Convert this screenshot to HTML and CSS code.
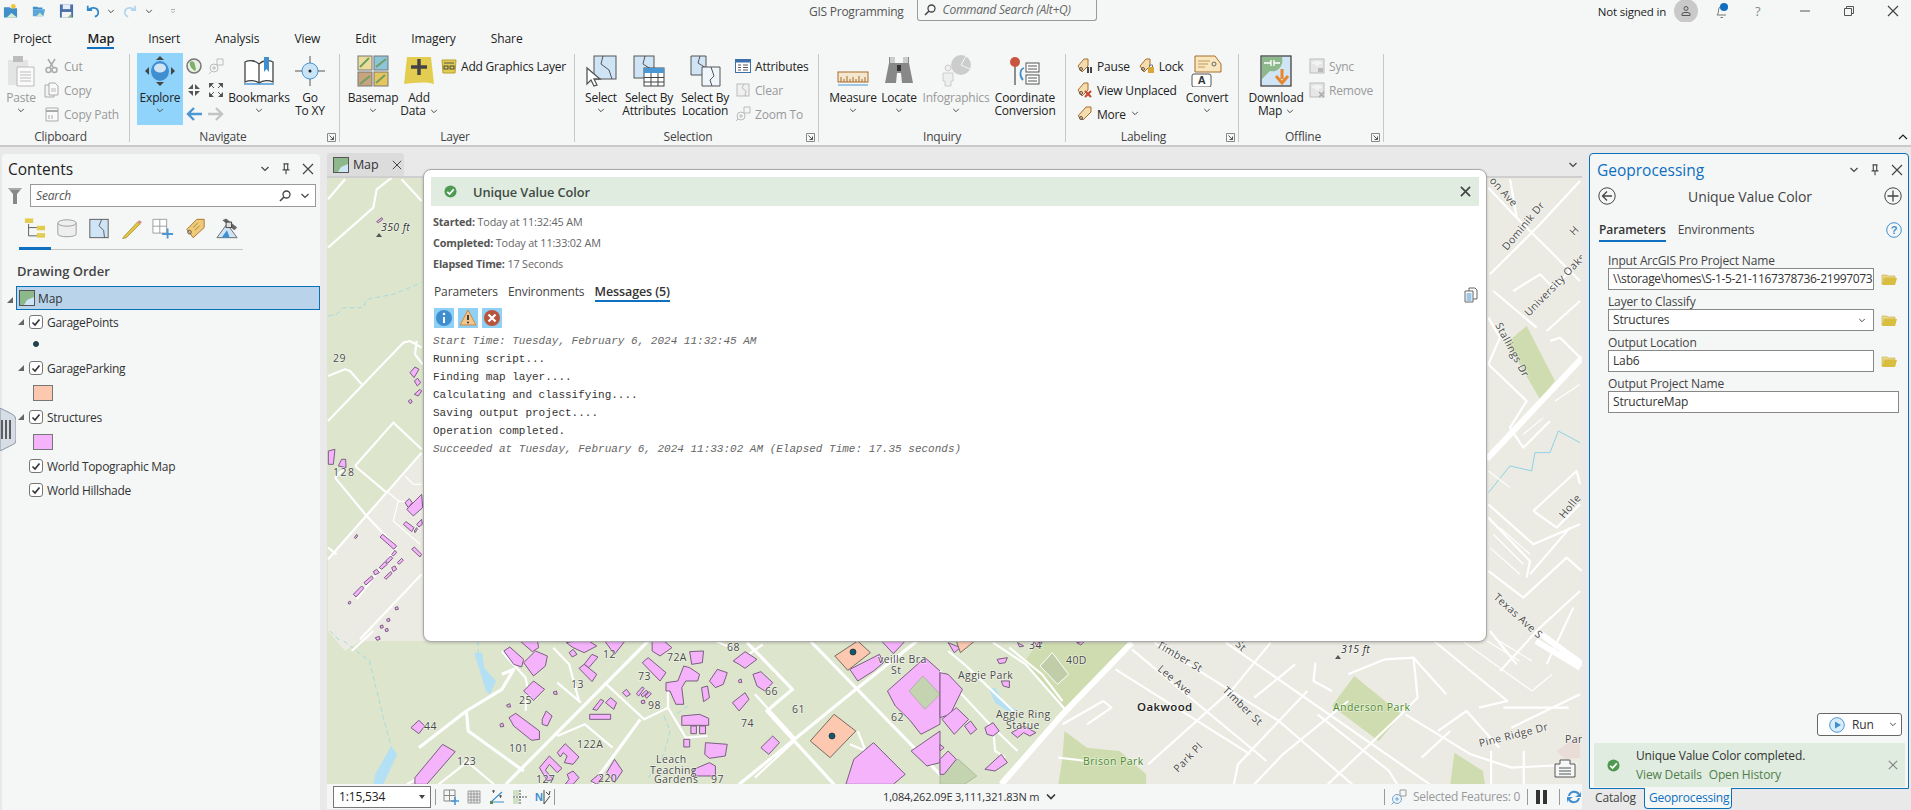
FILE: index.html
```html
<!DOCTYPE html>
<html lang="en">
<head>
<meta charset="utf-8">
<title>ArcGIS Pro</title>
<link rel="stylesheet" href="styles.css">
</head>
<body>
<svg class="defs" aria-hidden="true">
  <symbol id="chev" viewBox="0 0 10 6"><path d="M1.5 1l3.5 3.5L8.500 1" fill="none" stroke="#444" stroke-width="1.200"/></symbol>
  <symbol id="x" viewBox="0 0 12 12"><path d="M1 1l10 10M11 1L1 11" fill="none" stroke="#444" stroke-width="1.200"/></symbol>
  <symbol id="pin" viewBox="0 0 12 14"><path d="M3 1h6M4 1v7h4V1M2 8h8M6 8v5" fill="none" stroke="#444" stroke-width="1.300"/></symbol>
  <symbol id="check" viewBox="0 0 14 14"><rect x=".5" y=".5" width="13" height="13" rx="2.500" fill="#fff" stroke="#777"/><path d="M3.500 7.500l2.500 2.500 4.500-5.500" fill="none" stroke="#333" stroke-width="1.600"/></symbol>
  <symbol id="folder" viewBox="0 0 16 12"><path d="M1 2h5l1 1h7v2H3L1 11z" fill="#e8d88a" stroke="#c9ae3c" stroke-width=".6"/><path d="M3.500 5H16l-2 7H1z" fill="#d9bd3e"/></symbol>
  <symbol id="okc" viewBox="0 0 14 14"><circle cx="7" cy="7" r="6.500" fill="#4f9a52"/><path d="M3.500 7.300l2.500 2.400 4.500-5" fill="none" stroke="#fff" stroke-width="1.800"/></symbol>
  <symbol id="launch" viewBox="0 0 9 9"><path d="M.5.500h8v8h-8z" fill="none" stroke="#888"/><path d="M2.500 2.500l4 4M6.500 3.500v3h-3" fill="none" stroke="#555"/></symbol>
</svg>

<header class="titlebar">
  <svg class="q15" viewBox="0 0 16 16"><path d="M1 4h6l1 1h7v10H1z" fill="#3f8fc9"/><path d="M4 15l5-5 6 5z" fill="#d7efd0"/><circle cx="11" cy="3" r="2.500" fill="#f3c33c"/></svg>
  <svg class="q14 m14" viewBox="0 0 16 16"><path d="M1 3h5l1 1h5v2H1z" fill="#3f8fc9"/><path d="M1 6h14l-2 8H1z" fill="#5aa6d8"/><path d="M5 14l4-4 4 4z" fill="#cfe8c6"/></svg>
  <svg class="q15 m13" viewBox="0 0 16 16"><rect x="1" y="1" width="14" height="14" fill="#4b6fa8"/><rect x="4" y="1" width="8" height="5" fill="#e8eef5"/><rect x="3" y="9" width="10" height="6" fill="#f5f5f5"/><path d="M9 15l4-4v4z" fill="#8dbb7a"/></svg>
  <svg class="q14 m12" viewBox="0 0 16 16"><path d="M2 2v5h5M2.500 7C5 3.500 13 3 14 9c.4 3-2 5-4 5.500" fill="none" stroke="#2f86c8" stroke-width="2"/></svg>
  <svg class="chev8 m7" viewBox="0 0 10 6"><use href="#chev"/></svg>
  <svg class="q14 m8" viewBox="0 0 16 16"><path d="M14 2v5H9M13.500 7C11 3.500 3 3 2 9c-.4 3 2 5 4 5.500" fill="none" stroke="#b7d5ea" stroke-width="2"/></svg>
  <svg class="chev8 m8" viewBox="0 0 10 6"><use href="#chev"/></svg>
  <svg class="chev8 m16" viewBox="0 0 10 10"><path d="M1 1h8M1.500 4l3.500 3.500L8.500 4" fill="none" stroke="#666"/></svg>
  <span class="apptitle">GIS Programming</span>
  <div class="cmdsearch">
    <svg class="i12" viewBox="0 0 12 12"><circle cx="7.500" cy="4.500" r="3.500" fill="none" stroke="#444" stroke-width="1.300"/><path d="M5 7l-4 4" stroke="#444" stroke-width="1.600"/></svg>
    <span>Command Search (Alt+Q)</span>
  </div>
  <div class="winright">
    <span class="signin">Not signed in</span>
    <span class="avatar"><svg class="i12" viewBox="0 0 12 12"><circle cx="6" cy="3.500" r="2" fill="none" stroke="#555"/><path d="M2 10.500h8V8.500l-2-1H4l-2 1z" fill="none" stroke="#555"/></svg></span>
    <span class="bell"><svg class="bellico" viewBox="0 0 16 16"><path d="M3 12c2-2 1-4 2-7 .6-1.500 2.500-2 4-1M3 12h9M6.500 14.500h2.500" fill="none" stroke="#777"/><circle cx="10" cy="4" r="4" fill="#0f6fc0"/></svg></span>
    <span class="help">?</span>
    <svg class="winbtn gapmin" viewBox="0 0 12 12"><path d="M1 6h10" stroke="#555"/></svg>
    <svg class="winbtn gapmax" viewBox="0 0 12 12"><path d="M1.500 3.500h7v7h-7zM3.500 3.500v-2h7v7h-2" fill="none" stroke="#555"/></svg>
    <svg class="winbtn gapmax" viewBox="0 0 12 12"><use href="#x"/></svg>
  </div>
</header>

<nav class="tabs">
  <span class="tab">Project</span><span class="tab on">Map</span><span class="tab">Insert</span><span class="tab">Analysis</span><span class="tab">View</span><span class="tab">Edit</span><span class="tab">Imagery</span><span class="tab">Share</span>
</nav>

<section class="ribbon">
  <div class="group g-clip">
    <div class="gbody">
      <div class="big w-paste dim">
        <svg class="bigico" viewBox="0 0 32 32"><path d="M3 5h20v25H3z" fill="#e4e4e4"/><rect x="8" y="1" width="10" height="6" fill="#bdbdbd"/><path d="M12 12h17v19H12z" fill="#fafafa" stroke="#bbb"/><path d="M15 17h11M15 20h11M15 23h11M15 26h11" stroke="#bbb"/></svg>
        <span>Paste</span><svg class="chev" viewBox="0 0 10 6"><use href="#chev"/></svg>
      </div>
      <div class="col">
        <div class="sm dim"><svg class="ico16" viewBox="0 0 16 16"><path d="M4 1l5 8M11 1L6 9" stroke="#aaa" stroke-width="1.500"/><circle cx="4.500" cy="12" r="2.500" fill="none" stroke="#aaa" stroke-width="1.500"/><circle cx="10.500" cy="12" r="2.500" fill="none" stroke="#aaa" stroke-width="1.500"/></svg>Cut</div>
        <div class="sm dim"><svg class="ico16" viewBox="0 0 16 16"><path d="M1 3h9v12H1z" fill="#f4f4f4" stroke="#aaa"/><path d="M5 1h6l3 3v9H5z" fill="#fafafa" stroke="#aaa"/><path d="M7 7h5M7 9h5" stroke="#bbb"/></svg>Copy</div>
        <div class="sm dim"><svg class="ico16" viewBox="0 0 16 16"><path d="M2 2h12v13H2z" fill="#fafafa" stroke="#aaa"/><path d="M2 5h12" stroke="#aaa" stroke-width="2"/><path d="M5 9v4M8 9v4" stroke="#aaa"/></svg>Copy Path</div>
      </div>
    </div>
    <div class="glabel">Clipboard</div>
  </div>

  <div class="group g-nav">
    <div class="gbody">
      <div class="big w-explore active">
        <svg class="bigico" viewBox="0 0 32 32"><path d="M16 1l4 4h-8zM16 31l-4-4h8zM1 16l4-4v8zM31 16l-4-4v8z" fill="#444"/><ellipse cx="16" cy="16" rx="9" ry="10" fill="#3f8fd0"/><ellipse cx="16" cy="13" rx="6" ry="4.500" fill="#cfe5f5"/></svg>
        <span>Explore</span><svg class="chev" viewBox="0 0 10 6"><use href="#chev"/></svg>
      </div>
      <div class="navgrid">
        <svg class="ico16" viewBox="0 0 16 16"><circle cx="8" cy="8" r="7" fill="#e8f0e4" stroke="#777" stroke-width="1.500"/><path d="M4 4c3-2 5 1 5 3s2 4 0 6c-3-2-6-5-5-9z" fill="#7eb06a"/></svg>
        <svg class="ico16" viewBox="0 0 16 16"><circle cx="6" cy="10" r="4" fill="none" stroke="#bbb"/><path d="M3 14l-2 2M4 10h4M6 8v4" stroke="#bbb"/><path d="M9 1h6v6H9z" fill="none" stroke="#bbb"/></svg>
        <svg class="ico16" viewBox="0 0 16 16"><path d="M7 7H2l5-5zM9 7h5L9 2zM7 9H2l5 5zM9 9h5l-5 5z" fill="#555"/></svg>
        <svg class="ico16" viewBox="0 0 16 16"><path d="M1 1h5L1 6zM15 1h-5l5 5zM1 15h5l-5-5zM15 15h-5l5-5z" fill="#555"/><path d="M3 3l3 3M13 3l-3 3M3 13l3-3M13 13l-3-3" stroke="#555"/></svg>
        <svg class="ico16" viewBox="0 0 16 16"><path d="M8 2L2 8l6 6M2 8h14" fill="none" stroke="#4a97d4" stroke-width="2.400"/></svg>
        <svg class="ico16" viewBox="0 0 16 16"><path d="M8 2l6 6-6 6M14 8H0" fill="none" stroke="#c4c4c4" stroke-width="2.400"/></svg>
      </div>
      <div class="big w-book">
        <svg class="bigico" viewBox="0 0 32 32"><path d="M2 7c4-2 10-2 14 2v19c-4-3-10-3-14-1zM30 7c-4-2-10-2-14 2v19c4-3 10-3 14-1z" fill="#fff" stroke="#444" stroke-width="1.300"/><path d="M21 2h5v15l-2.500-3-2.500 3z" fill="#3f8fd0"/><path d="M1 29h30" stroke="#4a97d4" stroke-width="1.500"/></svg>
        <span>Bookmarks</span><svg class="chev" viewBox="0 0 10 6"><use href="#chev"/></svg>
      </div>
      <div class="big w-goto">
        <svg class="bigico" viewBox="0 0 32 32"><circle cx="16" cy="16" r="8" fill="#c9e4f7" stroke="#4a97d4"/><path d="M16 1v7M16 24v7M1 16h7M24 16h7" stroke="#555"/><circle cx="16" cy="16" r="1.500" fill="#222"/></svg>
        <span>Go</span><span>To XY</span>
      </div>
    </div>
    <div class="glabel">Navigate</div>
    <svg class="launch" viewBox="0 0 9 9"><use href="#launch"/></svg>
  </div>

  <div class="group g-layer">
    <div class="gbody">
      <div class="big w-base">
        <svg class="bigico" viewBox="0 0 32 32"><rect x="1" y="1" width="14" height="14" fill="#eadd9c" stroke="#777"/><rect x="17" y="1" width="14" height="14" fill="#8cc4d8" stroke="#777"/><rect x="1" y="17" width="14" height="14" fill="#c8a47e" stroke="#777"/><rect x="17" y="17" width="14" height="14" fill="#e6c65c" stroke="#777"/><path d="M3 12l9-9M19 12l10-8M3 29l10-8M19 28l9-8" stroke="#6f9f63" stroke-width="2"/></svg>
        <span>Basemap</span><svg class="chev" viewBox="0 0 10 6"><use href="#chev"/></svg>
      </div>
      <div class="big w-add">
        <svg class="bigico" viewBox="0 0 32 32"><path d="M4 2h24l3 27c-10-3-20-1-30 0z" fill="#e3cd50"/><path d="M16 4v16M8 12h16" stroke="#444" stroke-width="3.500"/></svg>
        <span>Add</span><span>Data <svg class="chev in" viewBox="0 0 10 6"><use href="#chev"/></svg></span>
      </div>
      <div class="col"><div class="sm"><svg class="ico16" viewBox="0 0 16 16"><path d="M1 2h14l-1 13H2z" fill="#e3cd50" stroke="#b79f2e"/><path d="M3 5h10" stroke="#555"/><rect x="3" y="8" width="4" height="3" fill="none" stroke="#444"/><rect x="9" y="8" width="4" height="3" fill="none" stroke="#444"/></svg>Add Graphics Layer</div></div>
    </div>
    <div class="glabel">Layer</div>
  </div>

  <div class="group g-sel">
    <div class="gbody">
      <div class="big w-48">
        <svg class="bigico" viewBox="0 0 32 32"><rect x="9" y="1" width="22" height="23" fill="#cfe4f5" stroke="#555"/><path d="M18 1l-2 8 8 6 3 9" fill="none" stroke="#555"/><path d="M2 13v16l4-4 3 6 3-1-3-6h6z" fill="#fff" stroke="#555" stroke-width="1.300"/></svg>
        <span>Select</span><svg class="chev" viewBox="0 0 10 6"><use href="#chev"/></svg>
      </div>
      <div class="big w-48">
        <svg class="bigico" viewBox="0 0 32 32"><rect x="1" y="1" width="20" height="22" fill="#cfe4f5" stroke="#555"/><path d="M12 1l-2 8 11 7" fill="none" stroke="#555"/><rect x="11" y="13" width="20" height="18" fill="#fff" stroke="#444"/><rect x="11" y="13" width="20" height="5" fill="#4a97d4"/><path d="M11 22.500h20M11 27h20M18 18v13M25 18v13" stroke="#444"/></svg>
        <span>Select By</span><span>Attributes</span>
      </div>
      <div class="big w-56">
        <svg class="bigico" viewBox="0 0 32 32"><path d="M2 1h15v19H2z" fill="#cfe4f5" stroke="#555"/><path d="M11 1l-2 7 8 5" fill="none" stroke="#555"/><path d="M13 12h18v19H13z" fill="#eef5fb" stroke="#555"/><path d="M22 12l3 9-4 4 2 6" fill="none" stroke="#555"/></svg>
        <span>Select By</span><span>Location</span>
      </div>
      <div class="col">
        <div class="sm"><svg class="ico16" viewBox="0 0 16 16"><rect x=".5" y="1.500" width="15" height="13" fill="#fff" stroke="#3d6fa8"/><rect x=".5" y="1.500" width="15" height="3" fill="#3d6fa8"/><path d="M3 7h3M3 9.500h3M3 12h3M8 7h5M8 9.500h5M8 12h5" stroke="#555"/></svg>Attributes</div>
        <div class="sm dim"><svg class="ico16" viewBox="0 0 16 16"><rect x="2" y="2" width="12" height="12" fill="#f0f0f0" stroke="#bbb"/><path d="M9 2l-2 4 4 3-1 5" fill="none" stroke="#bbb"/></svg>Clear</div>
        <div class="sm dim"><svg class="ico16" viewBox="0 0 16 16"><circle cx="6" cy="10" r="4" fill="none" stroke="#bbb"/><path d="M3 13l-2 2M4 10h4M6 8v4" stroke="#bbb"/><path d="M9 1h6v6H9z" fill="none" stroke="#bbb"/></svg>Zoom To</div>
      </div>
    </div>
    <div class="glabel">Selection</div>
    <svg class="launch" viewBox="0 0 9 9"><use href="#launch"/></svg>
  </div>

  <div class="group g-inq">
    <div class="gbody">
      <div class="big w-50">
        <svg class="bigico" viewBox="0 0 32 32"><rect x="1" y="17" width="30" height="10" fill="#f5e6cf" stroke="#a86c2c"/><path d="M4 27v-5M7 27v-3M10 27v-6M13 27v-3M16 27v-5M19 27v-3M22 27v-6M25 27v-3M28 27v-5" stroke="#a86c2c"/><path d="M1 30h30" stroke="#4a97d4"/></svg>
        <span>Measure</span><svg class="chev" viewBox="0 0 10 6"><use href="#chev"/></svg>
      </div>
      <div class="big w-42">
        <svg class="bigico" viewBox="0 0 32 32"><path d="M6 2h6v6h8V2h6v6l4 20h-11l-1-10h-4l-1 10H2L6 8z" fill="#888"/><rect x="7" y="2" width="5" height="6" fill="#ccc"/><rect x="20" y="2" width="5" height="6" fill="#ccc"/><rect x="14" y="10" width="4" height="6" fill="#333"/></svg>
        <span>Locate</span><svg class="chev" viewBox="0 0 10 6"><use href="#chev"/></svg>
      </div>
      <div class="big w-72 dim">
        <svg class="bigico" viewBox="0 0 32 32"><circle cx="21" cy="10" r="10" fill="#ccc"/><path d="M21 10L26 1M21 10l9 4" stroke="#f5f7f7"/><circle cx="8" cy="13" r="3" fill="#eee" stroke="#ccc"/><path d="M3 18h10v8h-2v5H5v-5H3z" fill="#eee" stroke="#ccc"/></svg>
        <span>Infographics</span><svg class="chev" viewBox="0 0 10 6"><use href="#chev"/></svg>
      </div>
      <div class="big w-66">
        <svg class="bigico" viewBox="0 0 32 32"><circle cx="6" cy="7" r="5" fill="#c8553d"/><path d="M6 12v18" stroke="#555" stroke-width="1.300"/><rect x="17" y="8" width="13" height="9" fill="#fff" stroke="#555"/><rect x="17" y="20" width="13" height="9" fill="#fff" stroke="#555"/><path d="M19 11h9M19 14h9M19 23h9M19 26h9" stroke="#555"/><path d="M15 13c-4 1-5 8-1 12" fill="none" stroke="#3f8fd0" stroke-width="1.800"/></svg>
        <span>Coordinate</span><span>Conversion</span>
      </div>
    </div>
    <div class="glabel">Inquiry</div>
  </div>

  <div class="group g-lab">
    <div class="gbody">
      <div class="col labcol">
        <div class="labrow">
          <div class="sm"><svg class="ico16" viewBox="0 0 16 16"><path d="M1 8l6-7h4v7l-6 6z" fill="#f3dcae" stroke="#a86c2c"/><circle cx="4" cy="11" r="1.500" fill="none" stroke="#555"/><path d="M11 9v6M14 9v6" stroke="#444" stroke-width="2"/></svg>Pause</div>
          <div class="sm"><svg class="ico16" viewBox="0 0 16 16"><path d="M1 8l6-7h4v7l-6 6z" fill="#f3dcae" stroke="#a86c2c"/><circle cx="4" cy="11" r="1.500" fill="none" stroke="#555"/><rect x="9" y="9" width="6" height="6" fill="#d9a63a"/><path d="M10.500 9V7h3v2" fill="none" stroke="#777"/></svg>Lock</div>
        </div>
        <div class="sm"><svg class="ico16" viewBox="0 0 16 16"><path d="M1 8l6-7h4v7l-6 6z" fill="#f3dcae" stroke="#a86c2c"/><circle cx="4" cy="11" r="1.500" fill="none" stroke="#555"/><path d="M8 9l6 6M14 9l-6 6" stroke="#c8452f" stroke-width="2"/></svg>View Unplaced</div>
        <div class="sm"><svg class="ico16" viewBox="0 0 16 16"><path d="M1 10l8-9h5v5l-8 8z" fill="#f3dcae" stroke="#a86c2c"/><circle cx="4" cy="12" r="1.500" fill="none" stroke="#555"/></svg>More <svg class="chev in" viewBox="0 0 10 6"><use href="#chev"/></svg></div>
      </div>
      <div class="big w-50">
        <svg class="bigico" viewBox="0 0 32 32"><path d="M4 1h20l6 8v8H4z" fill="#f8e6bf" stroke="#a86c2c"/><path d="M7 6h12M7 9h10M7 12h7" stroke="#c09a5c"/><circle cx="23" cy="9" r="2" fill="none" stroke="#666"/><rect x="1" y="19" width="19" height="13" rx="2" fill="#fff" stroke="#555"/><text x="10.500" y="29" class="ic-a">A</text></svg>
        <span>Convert</span><svg class="chev" viewBox="0 0 10 6"><use href="#chev"/></svg>
      </div>
    </div>
    <div class="glabel">Labeling</div>
    <svg class="launch" viewBox="0 0 9 9"><use href="#launch"/></svg>
  </div>

  <div class="group g-off">
    <div class="gbody">
      <div class="big w-66">
        <svg class="bigico" viewBox="0 0 32 32"><rect x="1" y="1" width="30" height="30" fill="#cfe4f5" stroke="#444" stroke-width="1.300"/><path d="M2 2h20c2 8-4 16-12 14L2 24z" fill="#8db98a"/><path d="M4 8h7M11 5v6M14 5v6M14 8h6" stroke="#fff" stroke-width="1.300"/><path d="M22 14v10M16 21l6 7 6-7" fill="none" stroke="#e8862e" stroke-width="3"/></svg>
        <span>Download</span><span>Map <svg class="chev in" viewBox="0 0 10 6"><use href="#chev"/></svg></span>
      </div>
      <div class="col">
        <div class="sm dim"><svg class="ico16" viewBox="0 0 16 16"><rect x="1" y="1" width="14" height="14" fill="#e6e6e6" stroke="#bbb"/><path d="M3 5h3M7 3v5M9 3v5M9 5h4" stroke="#fff"/><path d="M9 11h5M14 13H9" stroke="#aaa" stroke-width="1.500"/></svg>Sync</div>
        <div class="sm dim"><svg class="ico16" viewBox="0 0 16 16"><rect x="1" y="1" width="14" height="14" fill="#e6e6e6" stroke="#bbb"/><path d="M3 5h3M7 3v5M9 3v5M9 5h4" stroke="#fff"/><path d="M10 10l5 5M15 10l-5 5" stroke="#aaa" stroke-width="1.500"/></svg>Remove</div>
      </div>
    </div>
    <div class="glabel">Offline</div>
    <svg class="launch" viewBox="0 0 9 9"><use href="#launch"/></svg>
  </div>
  <svg class="collapse" viewBox="0 0 10 6"><path d="M1 5l4-4 4 4" fill="none" stroke="#222" stroke-width="1.200"/></svg>
</section>

<main class="main">
  <aside class="contents">
    <div class="panehead">
      <h2 class="panetitle">Contents</h2>
      <div class="panectl"><svg class="c10" viewBox="0 0 10 6"><use href="#chev"/></svg><svg class="c12" viewBox="0 0 12 14"><use href="#pin"/></svg><svg class="c12" viewBox="0 0 12 12"><use href="#x"/></svg></div>
    </div>
    <div class="searchrow">
      <svg class="filter" viewBox="0 0 14 16"><path d="M0 0h14L9 6v10H5V6z" fill="#888"/><path d="M1 1h12" stroke="#ccc"/></svg>
      <div class="searchbox"><span>Search</span><svg class="i12" viewBox="0 0 12 12"><circle cx="7.500" cy="4.500" r="3.500" fill="none" stroke="#444" stroke-width="1.300"/><path d="M5 7l-4 4" stroke="#444" stroke-width="1.600"/></svg><svg class="c10" viewBox="0 0 10 6"><use href="#chev"/></svg></div>
    </div>
    <div class="viewtabs">
      <svg class="vt" viewBox="0 0 24 22"><rect x="1" y="0" width="9" height="5" fill="#e3cd50"/><rect x="14" y="8" width="9" height="5" fill="#e3cd50"/><rect x="14" y="16" width="9" height="5" fill="#e3cd50"/><path d="M5 6v13h9M5 10h9" fill="none" stroke="#555"/></svg>
      <svg class="vt" viewBox="0 0 24 22"><path d="M2 5v12c0 4 20 4 20 0V5" fill="#eee" stroke="#999"/><ellipse cx="12" cy="5" rx="10" ry="3.500" fill="#eee" stroke="#999"/></svg>
      <svg class="vt" viewBox="0 0 24 22"><rect x="2" y="1" width="20" height="20" fill="#cfe4f5" stroke="#555"/><path d="M15 1l-3 7 5 5 1 8" fill="none" stroke="#555"/></svg>
      <svg class="vt" viewBox="0 0 24 22"><path d="M4 20l15-16 3 2L7 21l-4 1z" fill="#e3c544" stroke="#99822a" stroke-width=".7"/><path d="M19 4l2-2 3 2-2 2z" fill="#d88"/></svg>
      <svg class="vt" viewBox="0 0 24 22"><path d="M1 1h15v15H1zM1 8.500h15M8.500 1v15" fill="#fff" stroke="#999"/><path d="M17 11v11M11 17h12" stroke="#4a97d4" stroke-width="2"/></svg>
      <svg class="vt" viewBox="0 0 24 22"><path d="M3 12L14 1h8v9L10 21z" fill="#eecb78" stroke="#a86c2c"/><path d="M10 10l5-5M12 13l5-5" stroke="#a07e3a"/><circle cx="6" cy="15" r="2" fill="none" stroke="#555"/></svg>
      <svg class="vt" viewBox="0 0 24 22"><path d="M1 21L12 6l11 15z" fill="#cfe4f5" stroke="#666"/><path d="M6 21l6-8 3 8z" fill="#3f8fd0"/><path d="M7 2l4-2 12 10-3 3z" fill="#666"/><rect x="11" y="4" width="6" height="6" fill="#ddd" stroke="#444"/></svg>
    </div>
    <h3 class="drawhead">Drawing Order</h3>
    <div class="maprow">
      <svg class="mapico" viewBox="0 0 16 16"><rect x=".5" y=".5" width="15" height="15" fill="#cfe4f5" stroke="#555"/><path d="M1 1h14v6l-7 3-3 5H1z" fill="#8db98a"/></svg>
      <span>Map</span>
    </div>
    <ul class="tree">
      <li class="row exp"><svg class="cb" viewBox="0 0 14 14"><use href="#check"/></svg>GaragePoints</li>
      <li class="symdot"><i class="dot"></i></li>
      <li class="row exp after-dot"><svg class="cb" viewBox="0 0 14 14"><use href="#check"/></svg>GarageParking</li>
      <li class="symbox"><i class="sw peach"></i></li>
      <li class="row exp"><svg class="cb" viewBox="0 0 14 14"><use href="#check"/></svg>Structures</li>
      <li class="symbox"><i class="sw pink"></i></li>
      <li class="row"><svg class="cb" viewBox="0 0 14 14"><use href="#check"/></svg>World Topographic Map</li>
      <li class="row"><svg class="cb" viewBox="0 0 14 14"><use href="#check"/></svg>World Hillshade</li>
    </ul>
    <svg class="handle" viewBox="0 0 16 43"><path d="M0 0l12 6q4 2 4 6v20q0 4-4 5L0 43z" fill="#d7dde4" stroke="#8a97a5"/><path d="M2 12v19M6 12v19M10 12v19" stroke="#333" stroke-width="1.500"/></svg>
  </aside>

  <div class="mid">
    <div class="docstrip">
      <div class="doctab">
        <svg class="mapico" viewBox="0 0 16 16"><rect x=".5" y=".5" width="15" height="15" fill="#cfe4f5" stroke="#555"/><path d="M1 1h14v6l-7 3-3 5H1z" fill="#8db98a"/></svg>
        <span>Map</span>
        <svg class="c12" viewBox="0 0 12 12"><use href="#x"/></svg>
      </div>
      <svg class="stripchev" viewBox="0 0 10 6"><use href="#chev"/></svg>
    </div>

    <svg class="map" viewBox="327 177 1255 606" role="img" aria-label="Map of College Station">
      <rect class="bg-green" x="327" y="177" width="1255" height="606"/>
      <polygon class="bg-gray" points="328,558 422,452 640,452 1130,452 1131,640 1001,783 1582,783 1582,177 1440,177 1440,640 423,640 360,640 345,650 328,630"/>

      <!-- left strip -->
      <g transform="translate(320 150) scale(.3333)">
        <polyline class="water-d" points="24,495 50,490 70,470 130,470 140,445 220,430 305,395"/>
        <polyline class="water-d" points="30,1440 60,1470"/>
        <polyline class="r" points="24,145 75,85"/>
        <polyline class="r" points="24,290 160,170 170,115 215,80"/>
        <polyline class="r" points="245,85 305,150"/>
        <polyline class="r" points="24,810 250,575 270,570 305,590"/>
        <polyline class="r" points="290,570 285,610 308,640"/>
        <polyline class="r" points="24,675 75,655 90,660 125,700"/>
        <polyline class="r" points="105,945 220,815 305,895"/>
        <polyline class="r" points="105,945 200,1025"/>
        <polyline class="r" points="305,905 24,1225"/>
        <polyline class="r" points="45,980 75,950"/>
        <polyline class="r" points="45,980 140,1095 230,1190 110,1345"/>
        <polyline class="r" points="305,1270 120,1465"/>
        <polyline class="r" points="24,1190 50,1210"/>
        <polyline class="rt" points="200,1020 235,1050 220,1110 300,1180"/>
        <polyline class="rt" points="255,975 280,1000 305,1000"/>
        <polyline class="rt" points="235,1050 305,1060"/>
        <g class="b">
          <polygon points="170,212 185,200 188,205 175,215"/><polygon points="270,665 285,648 297,655 282,680"/><polygon points="283,690 293,682 302,695 292,705"/><polygon points="283,730 300,715 305,720 295,735"/><polygon points="265,750 272,745 277,753 270,758"/><polygon points="25,900 45,895 40,940 25,940"/><polygon points="55,945 65,925 77,925 78,950"/><polygon points="255,1055 268,1043 277,1055 265,1070"/><polygon points="260,1075 305,1030 308,1070 280,1095"/><polygon points="250,1120 258,1112 282,1130 275,1142"/><polygon points="290,1120 305,1105 307,1120 297,1128"/><polygon points="283,1140 290,1130 292,1135 285,1145"/><polygon points="275,1195 283,1188 305,1210 300,1218"/><polygon points="180,1158 188,1150 230,1185 222,1195"/><polygon points="100,1330 125,1305 132,1312 108,1338"/><polygon points="132,1295 155,1275 160,1282 138,1302"/><polygon points="160,1262 170,1255 178,1265 165,1272"/><polygon points="178,1250 195,1232 202,1240 185,1255"/><polygon points="197,1230 212,1215 218,1222 203,1237"/><polygon points="215,1210 225,1198 230,1205 220,1215"/><polygon points="193,1280 212,1262 216,1268 198,1285"/><polygon points="215,1250 225,1245 230,1255 220,1262"/><polygon points="232,1235 245,1222 250,1228 238,1240"/><polygon points="103,1160 110,1150 113,1155 107,1163"/><polygon points="84,1355 90,1350 93,1356 87,1360"/>
          <polygon points="180,1425 188,1422 190,1430 182,1432"/><polygon points="200,1405 208,1402 210,1410 202,1412"/><polygon points="225,1370 233,1367 235,1375 227,1377"/><polygon points="195,1435 203,1432 205,1440 197,1442"/>
        </g>
      </g>

      <!-- lower strip, west of the highway -->
      <g transform="translate(320 630) scale(.3954 .3333)">
        <polygon class="lake" points="390,65 410,65 415,110 445,150 430,190 420,180"/>
        <polygon class="lake" points="135,460 140,430 180,345 195,370 160,460"/>
        <polyline class="water-d" points="60,30 125,90 160,260 180,345"/>
        <polyline class="water-d" points="400,30 400,65"/>
        <polyline class="water-d" points="870,255 885,300 870,370 830,440"/>
        <polyline class="water-d" points="930,225 890,260"/>
        <polyline class="rw" points="470,460 830,30"/>
        <polyline class="rw" points="690,460 810,265"/>
        <polyline class="r" points="80,60 135,0"/>
        <polyline class="rw" points="250,350 370,240 460,175 490,115 460,130"/>
        <polyline class="rw" points="370,240 375,300 515,420"/>
        <polyline class="r" points="460,60 470,75 520,140 525,170 520,240"/>
        <polyline class="r" points="590,50 630,100 655,210"/>
        <polyline class="r" points="600,155 660,215"/>
        <polyline class="r" points="720,155 820,265 880,230 880,160"/>
        <polyline class="r" points="600,315 670,280 740,350"/>
        <polyline class="rw" points="1080,35 1195,175 1130,240 1300,460"/>
        <polyline class="r" points="1100,190 1200,320"/>
        <polyline class="rw" points="1060,460 1350,180 1510,30"/>
        <polyline class="rw" points="1240,30 1568,430"/>
        <polyline class="r" points="880,230 925,320 980,315"/>
        <polyline class="r" points="1120,40 1060,90"/>
        <polyline class="r" points="220,460 250,440"/>
        <polyline class="r" points="300,460 360,405 370,390 440,460"/>
        <polyline class="r" points="1200,330 1100,440"/>
        <polyline class="r" points="1340,340 1380,360 1360,300"/>
        <polyline class="r" points="1000,30 1040,50"/>
        <g class="b">
          <polygon points="508,32 550,30 553,50 537,62"/><polygon points="623,35 635,32 680,30 700,45 668,65 640,50"/><polygon points="720,30 770,32 745,70"/><polygon points="840,30 870,30 890,50 860,75 840,60"/><polygon points="465,60 480,48 515,85 510,108 490,100"/><polygon points="515,95 545,60 575,75 570,105 540,135"/><polygon points="630,65 640,55 650,70 638,78"/><polygon points="668,100 688,70 703,78 680,110"/><polygon points="655,112 668,100 700,130 688,152"/><polygon points="815,95 830,80 875,125 860,150"/><polygon points="935,62 970,60 967,95 940,100"/><polygon points="1045,90 1075,62 1105,85 1075,112 1060,100"/><polygon points="875,155 905,150 920,105 935,110 960,130 955,150 925,150 915,170 920,220 900,220 885,180 875,180"/><polygon points="985,150 1005,115 1030,125 1020,160 1000,170"/><polygon points="965,170 980,165 985,200 970,212"/><polygon points="1095,130 1115,122 1145,155 1125,180 1105,165"/><polygon points="1043,215 1075,185 1085,205 1060,240"/><polygon points="515,180 540,150 568,175 540,208"/><polygon points="765,185 775,175 785,190 775,197"/><polygon points="800,188 815,168 820,172 806,195"/><polygon points="812,192 825,178 830,183 816,198"/><polygon points="822,195 833,183 838,188 826,202"/><polygon points="690,235 710,205 718,210 700,238"/><polygon points="722,215 735,200 750,215 743,235"/><polygon points="682,250 735,250 735,265 682,265"/><polygon points="478,260 495,247 555,300 555,325 535,328 490,285"/><polygon points="562,265 572,240 587,255 575,285 562,280"/><polygon points="230,290 250,268 265,285 250,308"/><polygon points="915,255 960,250 983,262 983,283 915,283"/><polygon points="938,285 952,285 952,308 938,308"/><polygon points="960,285 975,285 975,308 960,308"/><polygon points="920,325 935,325 935,348 920,348"/><polygon points="975,335 1030,340 1025,375 985,382 973,370"/><polygon points="1115,350 1145,315 1162,335 1135,370"/><polygon points="945,415 985,395 1000,405 1000,435 945,435"/><polygon points="240,440 310,340 342,362 270,460 240,460"/><polygon points="600,365 620,338 655,378 640,400 618,395 625,375 615,365 608,378"/><polygon points="555,410 580,375 612,412 600,425 580,400 570,418 590,445 575,450"/><polygon points="625,430 640,420 655,440 640,460 620,460 630,445"/><polygon points="725,425 745,385 765,420 745,455 735,440"/><polygon points="685,450 705,430 715,445 700,460"/><polygon points="140,20 150,16 152,25 144,28"/><polygon points="590,183 598,180 600,190 592,190"/><polygon points="455,280 462,276 465,286 457,288"/><polygon points="472,222 480,218 482,228 474,228"/><polygon points="1058,148 1065,144 1067,154 1060,155"/><polygon points="812,210 820,207 822,216 814,218"/>
          <polygon points="1340,115 1415,70 1425,95 1400,120 1360,150"/><polygon points="1420,30 1480,30 1450,68"/><polygon points="1435,180 1530,80 1568,120 1568,280 1520,310 1490,265 1455,225"/><polygon points="1495,360 1568,300 1568,395 1535,405"/><polygon points="1330,460 1350,385 1400,335 1480,430 1450,460"/>
        </g>
        <polygon class="court" points="1490,180 1525,135 1568,190 1530,235"/>
        <g class="g">
          <polygon points="1302,75 1360,30 1392,65 1335,118"/><polygon points="1240,330 1300,250 1355,300 1290,380"/>
        </g>
      </g>
      <circle class="pt" cx="853" cy="651" r="3"/>
      <circle class="pt" cx="832" cy="735" r="3"/>

      <!-- lower strip, east -->
      <g transform="translate(940 630) scale(.4082 .3333)">
        <polygon class="park" points="205,95 310,240 470,35 240,35"/>
        <polygon class="park" points="960,225 1015,135 1130,250 1075,330"/>
        <polygon class="park" points="305,300 360,350 440,360 505,430 505,460 290,460 300,380"/>
        <polygon class="park" points="1260,365 1330,420 1335,460 1250,460"/>
        <polygon class="pinkland" points="1510,360 1568,310 1568,380 1530,385"/>
        <polygon class="court" points="0,400 45,385 90,435 60,460 0,460"/>
        <polygon class="field" points="245,105 275,65 315,130 288,160"/>
        <polygon class="lake" points="120,175 135,170 155,210 190,240 165,240 135,215"/>
        <polyline class="rx" points="150,460 300,250 470,35"/>
        <polyline class="r" points="130,35 210,100 310,240"/>
        <polyline class="r" points="170,50 250,130 300,210"/>
        <polyline class="r" points="0,120 130,290 190,360"/>
        <polyline class="r" points="20,60 60,100 180,240"/>
        <polyline class="r" points="130,290 135,360 160,380"/>
        <polyline class="r" points="525,35 830,270 1010,460"/>
        <polyline class="r" points="470,55 800,390"/>
        <polyline class="r" points="430,115 760,370"/>
        <polyline class="r" points="700,35 1200,460"/>
        <polyline class="r" points="810,35 720,170 510,400"/>
        <polyline class="r" points="870,100 770,200"/>
        <polyline class="r" points="900,180 730,400 720,460"/>
        <polyline class="r" points="1000,210 840,370 770,460"/>
        <polyline class="r" points="1130,250 950,460"/>
        <polyline class="r" points="1000,130 1090,85 1160,80 1170,200 1130,250"/>
        <polyline class="r" points="925,250 1100,420 1120,460"/>
        <polyline class="r" points="920,95 915,150 960,180"/>
        <polyline class="r" points="1140,250 1300,370 1400,410 1560,400"/>
        <polyline class="r" points="1160,80 1240,190"/>
        <polyline class="r" points="1220,300 1290,240 1370,350"/>
        <polyline class="r" points="1210,30 1390,210 1320,230"/>
        <polyline class="rt" points="1280,30 1450,180 1500,130"/>
        <polyline class="rx" points="1460,30 1568,110"/>
        <polyline class="r" points="1380,230 1540,230"/>
        <polyline class="r" points="1400,290 1568,190"/>
        <polyline class="rt" points="1340,30 1420,90"/>
        <polyline class="rt" points="1370,30 1450,90"/>
        <polyline class="r" points="290,380 360,390"/>
        <polyline class="r" points="300,280 400,210 420,230 360,280"/>
        <polyline class="r" points="1180,380 1250,300"/>
        <polyline class="r" points="1350,360 1350,460"/>
        <polyline class="r" points="1430,360 1430,460"/>
        <g class="b">
          <polygon points="0,125 20,130 55,175 25,250 0,260"/><polygon points="5,265 40,230 70,265 35,310"/><polygon points="60,285 75,270 90,295 75,310"/><polygon points="110,290 130,275 145,300 130,315 115,310"/><polygon points="175,305 205,285 235,305 220,315 205,305 190,320"/><polygon points="0,340 10,350 0,360"/><polygon points="0,385 20,360 40,385 10,430 0,430"/><polygon points="110,415 150,370 165,395 135,420"/><polygon points="140,85 165,80 160,95 145,98"/><polygon points="150,150 170,150 170,170 155,165"/><polygon points="20,35 50,50 35,65"/><polygon points="190,35 205,45 195,48"/><polygon points="230,30 250,35 240,50"/><polygon points="335,35 355,30 345,42"/>
        </g>
        <polygon class="g-f" points="40,30 85,30 50,65"/>
      </g>

      <!-- right strip -->
      <g transform="translate(1480 150) scale(.3333)">
        <polygon class="park" points="80,575 140,525 225,690 180,745"/>
        <polyline class="water" points="25,1025 90,945 155,960 165,905 210,905 235,840 300,875"/>
        <polyline class="rx" points="20,925 307,620"/>
        <polyline class="rx" points="170,1440 307,1540"/>
        <polyline class="r" points="25,110 110,200 220,310 300,390"/>
        <polyline class="r" points="300,90 180,220 30,370"/>
        <polyline class="r" points="110,200 90,85"/>
        <polyline class="r" points="25,500 60,560 25,640"/>
        <polyline class="r" points="40,420 170,530"/>
        <polyline class="r" points="100,420 180,370 220,410 300,330"/>
        <polyline class="r" points="25,640 140,750 90,830 130,890 210,810"/>
        <polyline class="r" points="210,570 240,560 300,620"/>
        <polyline class="r" points="200,540 300,450"/>
        <polyline class="r" points="160,1080 290,960 300,1000"/>
        <polyline class="r" points="160,1080 230,1130 300,1060"/>
        <polyline class="r" points="25,1060 160,1180 300,1120"/>
        <polyline class="r" points="150,1270 270,1130"/>
        <polyline class="r" points="25,1260 130,1340 260,1220 305,1260"/>
        <polyline class="r" points="25,1100 150,1230 140,1280"/>
        <polyline class="rt" points="40,1150 130,1240"/>
        <polyline class="rt" points="60,1130 150,1210"/>
        <polyline class="rt" points="30,1190 120,1270"/>
        <polyline class="r" points="60,1560 180,1430 300,1320"/>
        <polyline class="r" points="30,1440 110,1540"/>
        <polyline class="r" points="200,1540 280,1370"/>
        <polyline class="rt" points="130,850 190,800"/>
        <polyline class="rt" points="25,960 90,1010"/>
        <polyline class="rt" points="225,750 300,700"/>
      </g>

      <g class="ml">
        <text x="333" y="361">29</text><text x="333" y="475" class="sp">128</text>
        <text x="603" y="657">12</text><text x="667" y="660">72A</text><text x="727" y="650">68</text><text x="638" y="679">73</text><text x="571" y="687">13</text><text x="765" y="694">66</text><text x="519" y="703">25</text><text x="648" y="708">98</text><text x="792" y="712">61</text><text x="891" y="720">62</text><text x="741" y="726">74</text><text x="424" y="729">44</text><text x="577" y="747">122A</text><text x="509" y="751">101</text><text x="457" y="764">123</text>
        <text x="656" y="762">Leach</text><text x="650" y="773">Teaching</text><text x="654" y="782">Gardens</text>
        <text x="598" y="781">220</text><text x="536" y="782">127</text><text x="711" y="782">97</text>
        <text x="878" y="662">veille Bra</text><text x="891" y="673">St</text>
        <text x="1029" y="648">34</text><text x="1066" y="663">40D</text><text x="958" y="678">Aggie Park</text><text x="996" y="717">Aggie Ring</text><text x="1006" y="728">Statue</text>
        <text x="1137" y="710" class="place">Oakwood</text>
        <text x="1333" y="710" class="grn">Anderson Park</text><text x="1083" y="764" class="grn">Brison Park</text>
        <text class="it" x="1341" y="652">315 ft</text><text class="it" x="381" y="230">350 ft</text>
        <text x="1565" y="742">Par</text>
        <text transform="translate(1156 646) rotate(30)">Timber St</text>
        <text transform="translate(1222 690) rotate(44)">Timber St</text>
        <text transform="translate(1157 669) rotate(40)">Lee Ave</text>
        <text transform="translate(1228 638) rotate(42)">k St</text>
        <text transform="translate(1178 772) rotate(-46)">Park Pl</text>
        <text transform="translate(1480 746) rotate(-14)">Pine Ridge Dr</text>
        <text transform="translate(1489 180) rotate(48)">on Ave</text>
        <text transform="translate(1507 250) rotate(-50)">Dominik Dr</text>
        <text transform="translate(1529 316) rotate(-46)">University Oaks</text>
        <text transform="translate(1574 235) rotate(-46)">H</text>
        <text transform="translate(1495 324) rotate(62)">Stallings Dr</text>
        <text transform="translate(1564 518) rotate(-50)">Holle</text>
        <text transform="translate(1493 597) rotate(42)">Texas Ave S</text>
      </g>
      <path class="tri" d="M379 232l3 4h-6zM1338 654l3 4h-6z"/>
    </svg>
    <svg class="gallery" viewBox="0 0 22 19"><path d="M1 5h5V1h10v4h5v13H1z" fill="#f5f7f7" stroke="#555"/><path d="M5 9h12M5 12h12M5 15h12" stroke="#555"/></svg>

    <section class="dialog">
      <div class="dlghead">
        <svg class="okc" viewBox="0 0 14 14"><use href="#okc"/></svg>
        <span class="dlgtitle">Unique Value Color</span>
        <svg class="dlgx" viewBox="0 0 12 12"><path d="M1 1l10 10M11 1L1 11" fill="none" stroke="#444" stroke-width="1.800"/></svg>
      </div>
      <div class="meta">
        <p><b>Started:</b> Today at 11:32:45 AM</p>
        <p><b>Completed:</b> Today at 11:33:02 AM</p>
        <p><b>Elapsed Time:</b> 17 Seconds</p>
      </div>
      <div class="dlgtabs"><span>Parameters</span><span>Environments</span><span class="on">Messages (5)</span></div>
      <div class="msgbtns">
        <span class="msgbtn"><svg viewBox="0 0 18 18"><circle cx="9" cy="9" r="8" fill="#3f8fd0"/><circle cx="9" cy="5" r="1.300" fill="#fff"/><path d="M9 8v6" stroke="#fff" stroke-width="2"/></svg></span>
        <span class="msgbtn"><svg viewBox="0 0 18 18"><path d="M9 1l8 15H1z" fill="#f3c48c" stroke="#c98a45"/><path d="M9 6v5" stroke="#333" stroke-width="1.800"/><circle cx="9" cy="13.500" r="1" fill="#333"/></svg></span>
        <span class="msgbtn"><svg viewBox="0 0 18 18"><circle cx="9" cy="9" r="8" fill="#b9533c"/><path d="M5.500 5.500l7 7M12.500 5.500l-7 7" stroke="#fff" stroke-width="2.200"/></svg></span>
      </div>
      <div class="msgs">
        <div class="i">Start Time: Tuesday, February 6, 2024 11:32:45 AM</div>
        <div>Running script...</div>
        <div>Finding map layer....</div>
        <div>Calculating and classifying....</div>
        <div>Saving output project....</div>
        <div>Operation completed.</div>
        <div class="i">Succeeded at Tuesday, February 6, 2024 11:33:02 AM (Elapsed Time: 17.35 seconds)</div>
      </div>
      <svg class="copyico" viewBox="0 0 14 16"><path d="M5 1h6l2 2v9H5z" fill="#fff" stroke="#666"/><path d="M1 4h8v11H1z" fill="#fff" stroke="#666"/><path d="M2.500 7h5M2.500 9h5M2.500 11h5M2.500 13h5" stroke="#3f8fd0"/></svg>
    </section>

    <footer class="status">
      <div class="scale"><span>1:15,534</span><i class="caret"></i></div>
      <i class="vsep"></i>
      <div class="sticons">
        <svg class="ico16" viewBox="0 0 16 16"><path d="M1 1h11v11H1zM1 6.500h11M6.500 1v11" fill="none" stroke="#888"/><path d="M12 8v8M8 12h8" stroke="#4a97d4" stroke-width="1.600"/></svg>
        <svg class="ico16" viewBox="0 0 16 16"><path d="M2 2h12v12H2zM2 5h12M2 8h12M2 11h12M5 2v12M8 2v12M11 2v12" fill="#eee" stroke="#888" stroke-width=".8"/></svg>
        <svg class="ico16" viewBox="0 0 16 16"><path d="M2 13h13M2 13L13 3" stroke="#3f8fd0" stroke-width="1.200"/><path d="M3 2h3M4.500 1v3M10 7h3M11.500 6v3" stroke="#555"/><rect x="1" y="12" width="3" height="3" fill="#5a8f4c"/></svg>
        <svg class="ico16" viewBox="0 0 16 16"><rect x="1" y="1" width="6" height="6" fill="#cfe0c4"/><rect x="1" y="9" width="6" height="6" fill="#cfe0c4"/><path d="M8 1v14M1 8h14" stroke="#555" stroke-dasharray="2 1"/></svg>
        <svg class="ico16" viewBox="0 0 16 16"><text x="0" y="12" class="ic-n">N</text><path d="M9 1v14l6-8M11 3l3 3 1-4" fill="none" stroke="#444"/></svg>
      </div>
      <i class="vsep"></i>
      <div class="coords"><span>1,084,262.09E 3,111,321.83N m</span><svg class="chev10" viewBox="0 0 10 6"><path d="M1 1l4 4 4-4" fill="none" stroke="#333" stroke-width="1.600"/></svg></div>
      <i class="vsep"></i>
      <div class="selected"><svg class="ico16" viewBox="0 0 16 16"><circle cx="6" cy="10" r="4.500" fill="#e8f3fb" stroke="#7aa6c8"/><path d="M3 13l-2.500 2.500M4 10h4M6 8v4" stroke="#7aa6c8"/><path d="M9 1h6v6H9z" fill="none" stroke="#999"/></svg><span>Selected Features: 0</span></div>
      <i class="vsep"></i>
      <div class="pause"><i></i><i></i></div>
      <i class="vsep"></i>
      <svg class="refresh" viewBox="0 0 16 16"><path d="M2 7c1-6 9-7 12-2l1-3v6h-6l3-2C10 3 5 3 4 7zM14 9c-1 6-9 7-12 2l-1 3V8h6l-3 2c2 3 7 3 8-1z" fill="#3f8fd0"/></svg>
    </footer>
  </div>

  <aside class="side">
    <div class="gp">
      <div class="panehead gphead">
        <h2 class="panetitle blue">Geoprocessing</h2>
        <div class="panectl"><svg class="c10" viewBox="0 0 10 6"><use href="#chev"/></svg><svg class="c12" viewBox="0 0 12 14"><use href="#pin"/></svg><svg class="c12" viewBox="0 0 12 12"><use href="#x"/></svg></div>
      </div>
      <div class="gpnav">
        <svg class="navc" viewBox="0 0 18 18"><circle cx="9" cy="9" r="8.200" fill="none" stroke="#444"/><path d="M9 4.500L4.500 9 9 13.500M4.500 9H14" fill="none" stroke="#444" stroke-width="1.300"/></svg>
        <span class="gptool">Unique Value Color</span>
        <svg class="navc" viewBox="0 0 18 18"><circle cx="9" cy="9" r="8.200" fill="none" stroke="#444"/><path d="M9 3.500v11M3.500 9h11" stroke="#444" stroke-width="1.300"/></svg>
      </div>
      <div class="gptabs">
        <span class="on">Parameters</span><span>Environments</span>
        <svg class="helpc" viewBox="0 0 16 16"><circle cx="8" cy="8" r="7.300" fill="none" stroke="#3f8fd0"/><text x="8" y="12" class="ic-q">?</text></svg>
      </div>
      <form class="fields">
        <label class="flabel">Input ArcGIS Pro Project Name</label>
        <div class="frow"><div class="fbox clip">\\storage\homes\S-1-5-21-1167378736-21997073</div><svg class="fold" viewBox="0 0 16 12"><use href="#folder"/></svg></div>
        <label class="flabel">Layer to Classify</label>
        <div class="frow"><div class="fbox sel">Structures<svg class="chev8" viewBox="0 0 10 6"><use href="#chev"/></svg></div><svg class="fold" viewBox="0 0 16 12"><use href="#folder"/></svg></div>
        <label class="flabel">Output Location</label>
        <div class="frow"><div class="fbox">Lab6</div><svg class="fold" viewBox="0 0 16 12"><use href="#folder"/></svg></div>
        <label class="flabel">Output Project Name</label>
        <div class="frow"><div class="fbox full">StructureMap</div></div>
      </form>
      <div class="runrow">
        <div class="runbtn">
          <svg class="playc" viewBox="0 0 16 16"><circle cx="8" cy="8" r="7.300" fill="#d8ecfa" stroke="#4a97d4"/><path d="M6 4.500l6 3.500-6 3.500z" fill="#3f8fd0"/></svg>
          <span>Run</span>
          <svg class="chev8" viewBox="0 0 10 6"><use href="#chev"/></svg>
        </div>
      </div>
      <div class="notice">
        <svg class="okc" viewBox="0 0 14 14"><use href="#okc"/></svg>
        <div class="ntext">
          <div>Unique Value Color completed.</div>
          <div class="nlinks"><a>View Details</a><a>Open History</a></div>
        </div>
        <svg class="nx" viewBox="0 0 12 12"><path d="M1 1l10 10M11 1L1 11" fill="none" stroke="#8a8a8a" stroke-width="1.500"/></svg>
      </div>
    </div>
    <div class="sidetabs"><span class="stab">Catalog</span><span class="stab on">Geoprocessing</span></div>
  </aside>
</main>
</body>
</html>
```

FILE: styles.css
```css
*{box-sizing:border-box}
html,body{margin:0;padding:0}
body{width:1911px;height:810px;overflow:hidden;background:#e9e9e9;font:12px "Open Sans","Noto Sans",sans-serif;color:#333;display:flex;flex-direction:column;letter-spacing:-.15px}
svg{display:block;flex:none}
.defs{position:absolute;width:0;height:0}
h2,h3,p,ul{margin:0;padding:0;list-style:none;font-weight:400}

.titlebar{height:22px;background:#f5f7f7;display:flex;align-items:center;padding-left:3px}
.q15{width:15px;height:16px}.q14{width:14px;height:16px}
.chev8{width:8px;height:5px}.chev10{width:10px;height:7px}
.m7{margin-left:7px}.m8{margin-left:8px}.m12{margin-left:12px}.m13{margin-left:13px}.m14{margin-left:14px}.m16{margin-left:16px}
.apptitle{margin-left:632px;color:#555;letter-spacing:-.25px}
.cmdsearch{margin-left:13px;width:180px;height:21px;margin-top:-2px;border:1px solid #9a9a9a;border-top:0;border-radius:0 0 3px 3px;display:flex;align-items:center;gap:7px;padding-left:6px;font-style:italic;color:#666;background:#f5f7f7;letter-spacing:-.25px}
.i12{width:12px;height:12px}
.winright{margin-left:auto;display:flex;align-items:center;padding-right:12px}
.signin{color:#222;font-size:11.500px;letter-spacing:-.2px}
.avatar{margin-left:8px;width:24px;height:24px;border-radius:50%;background:#c9c9c9;display:flex;align-items:center;justify-content:center}
.bell{margin-left:16px}.bellico{width:16px;height:16px}
.help{margin-left:25px;color:#888;font-size:13px;width:10px}
.winbtn{width:12px;height:12px}
.gapmin{margin-left:34px}.gapmax{margin-left:32px}

.tabs{height:28px;background:#f5f7f7;display:flex;padding:9px 0 0 13px;gap:35px}
.tab{height:18px;line-height:15px;color:#222;font-size:12px;letter-spacing:-.1px}
.tab.on{font-weight:600;font-size:12.800px;margin-left:1px;margin-right:-1px;border-bottom:2px solid #0f6fc0}

.ribbon{height:97px;background:#f5f7f7;border-bottom:2px solid #c9c9c9;display:flex;padding-top:4px;position:relative;letter-spacing:-.2px}
.group{height:88px;border-right:1px solid #c8c8c8;position:relative}
.g-clip{width:130px}.g-nav{width:210px}.g-layer{width:235px}.g-sel{width:244px}.g-inq{width:247px}.g-lab{width:173px}.g-off{width:145px}
.gbody{height:76px;display:flex}
.glabel{height:12px;line-height:14px;text-align:center;color:#444}
.g-clip .glabel{padding-right:8px}
.g-nav .glabel{padding-right:23px}
.g-layer .glabel{padding-right:4px}
.g-sel .glabel{padding-right:17px}
.g-lab .glabel{padding-right:17px}
.g-off .glabel{padding-right:16px}
.launch{position:absolute;right:3px;bottom:0;width:9px;height:9px}
.collapse{position:absolute;right:3px;bottom:5px;width:10px;height:6px}
.big{display:flex;flex-direction:column;align-items:center;color:#222;line-height:13px;flex:none;white-space:nowrap}
.bigico{width:32px;height:32px;margin:1px 0 4px}
.chev{width:8px;height:5px;margin-top:4px}
.chev.in{display:inline-block;margin:0 0 1px 1px}
.big.dim{color:#999}
.w-paste{width:42px}
.w-explore{width:46px;margin:-1px 0 0 7px;height:72px;background:#90d4fb;padding-top:1px}
.w-book{width:60px;margin-left:5px}
.w-goto{width:42px}
.w-base{width:50px;margin-left:8px}
.w-add{width:42px}
.w-48{width:48px}.w-56{width:56px}.w-50{width:50px}.w-42{width:42px}.w-72{width:72px}.w-66{width:66px}
.g-sel .gbody{padding-left:2px}
.g-sel .w-56{margin-left:4px}
.g-inq .gbody{padding-left:9px}
.g-off .gbody{padding-left:4px}
.col{display:flex;flex-direction:column;flex:none}
.sm{height:24px;display:flex;align-items:center;gap:4px;color:#222;white-space:nowrap}
.sm.dim{color:#999}
.g-clip .col{margin-left:2px}
.g-layer .col{margin-left:1px}
.g-sel .col{margin-left:2px}
.ico16{width:16px;height:16px}
.navgrid{display:grid;grid-template-columns:16px 16px;column-gap:6px;row-gap:8px;margin:4px 0 0 3px;align-content:start}
.labcol{margin-left:11px;width:105px}
.labrow{display:flex;gap:9px}
.ic-a{font:700 11px "Liberation Sans",sans-serif;text-anchor:middle;fill:#333}
.ic-n{font:700 11px "Liberation Sans",sans-serif;fill:#3f8fd0}
.ic-q{font:700 11px "Liberation Sans",sans-serif;text-anchor:middle;fill:#3f8fd0}

.main{flex:1;display:flex;padding-top:6px;min-height:0}
.contents{width:318px;margin:1px 0 0 2px;background:#f5f7f7;border-radius:4px 4px 0 0;position:relative}
.panehead{height:29px;display:flex;align-items:center;padding:0 6px;justify-content:space-between}
.panetitle{font-size:15.500px;color:#222;letter-spacing:0;line-height:20px}
.panetitle.blue{color:#0f6fc0}
.panectl{display:flex;align-items:center;gap:10px}
.c10{width:10px;height:6px}.c12{width:12px;height:12px}
.searchrow{display:flex;align-items:center;padding:1px 4px 0;gap:8px;height:24px}
.filter{width:14px;height:16px;margin-left:2px}
.searchbox{flex:1;height:23px;background:#fff;border:1px solid #999;display:flex;align-items:center;padding:0 5px;gap:9px;font-style:italic;color:#555}
.searchbox span{flex:1}
.viewtabs{display:flex;gap:10px;height:38px;margin:5px 10px 0 17px;width:224px;padding-left:5px;padding-top:6px;border-bottom:1px solid #c4c4c4;position:relative}
.viewtabs::after{content:"";position:absolute;left:0;bottom:-1px;width:32px;height:3px;background:#0f6fc0}
.vt{width:22px;height:21px}
.drawhead{font-size:13px;font-weight:600;color:#444;padding-left:15px;height:36px;line-height:42px;letter-spacing:0}
.maprow{margin-left:14px;width:304px;height:24px;background:#b9d4ea;border:1px solid #0a70b8;display:flex;align-items:center;padding-left:2px;gap:3px;position:relative}
.maprow::before{content:"";position:absolute;left:-10px;top:10px;border-left:6px solid transparent;border-bottom:6px solid #666}
.mapico{width:16px;height:16px}
.row{height:24px;display:flex;align-items:center;padding-left:27px;gap:4px;color:#333;position:relative;letter-spacing:-.3px}
.row.exp::before{content:"";position:absolute;left:16px;top:9px;border-left:6px solid transparent;border-bottom:6px solid #666}
.cb{width:14px;height:14px}
.after-dot{margin-top:2px}
.symdot{height:20px;padding-left:31px;display:flex;align-items:center}
.dot{width:6px;height:6px;border-radius:50%;background:#0f4c63;border:1px solid #333}
.symbox{height:25px;padding-left:31px;display:flex;align-items:center}
.sw{width:20px;height:16px;border:1px solid #777;display:block}
.peach{background:#fcc9b0}.pink{background:#f4b3fb}
.handle{position:absolute;left:-2px;top:254px;width:16px;height:43px}

.mid{width:1255px;margin-left:7px;position:relative;display:flex;flex-direction:column}
.docstrip{height:25px;display:flex;align-items:flex-start;justify-content:space-between;border-bottom:2px solid #cfcfcf}
.doctab{width:77px;height:23px;background:#dcdcdc;border-radius:3px 3px 0 0;display:flex;align-items:center;padding-left:6px;gap:4px;color:#333;font-size:12.500px}
.doctab .c12{width:10px;height:10px;margin-left:10px}
.stripchev{width:10px;height:6px;margin:9px 4px 0 0}
.map{width:1255px;height:606px;display:block}
.bg-green{fill:#dde5cd}.bg-gray{fill:#ebebe3}
.map *{vector-effect:non-scaling-stroke}
.r,.rt,.rw,.rx,.water,.water-d{fill:none;stroke-linejoin:round}
.r{stroke:#fff;stroke-width:2.200px}
.rt{stroke:#fff;stroke-width:1.200px}
.rw{stroke:#fff;stroke-width:3.200px}
.rx{stroke:#fff;stroke-width:6px}
.water{stroke:#8dd3e6;stroke-width:1px}
.water-d{stroke:#a6dcdf;stroke-width:1px;stroke-dasharray:5 3}
.lake{fill:#b3e0f5}
.park{fill:#cfdcb0}
.pinkland{fill:#eadcd6}
.court{fill:#c5d4b0;stroke:#8a9a80;stroke-width:.5px}
.field{fill:#bfcea8;stroke:#fff;stroke-width:1px}
.b polygon{fill:#f4b3fb;stroke:#7a5f80;stroke-width:1px}
.g polygon,.g-f{fill:#fcc9b0;stroke:#7a6a60;stroke-width:1px}
.pt{fill:#0f5a73;stroke:#222;stroke-width:.7px}
.tri{fill:#555}
.ml text{font:10.500px "Open Sans",sans-serif;fill:#4a4a4a;letter-spacing:.4px;paint-order:stroke;stroke:rgba(255,255,255,.5);stroke-width:1.500px}
.ml .sp{letter-spacing:1.500px}
.ml .place{fill:#222;font-size:11.500px;font-weight:600}
.ml .grn{fill:#4a8a2a}
.ml .it{font-style:italic;fill:#333}
.gallery{position:absolute;left:1227px;top:606px;width:22px;height:19px}

.dialog{position:absolute;left:96px;top:16px;width:1064px;height:473px;background:#fff;border:1px solid #aaa;border-radius:8px;padding:7px 7px 0;box-shadow:0 1px 3px rgba(0,0,0,.2)}
.dlghead{height:29px;background:#e0ecdf;display:flex;align-items:center;padding-left:13px;gap:16px;position:relative}
.okc{width:13px;height:13px}
.dlgtitle{font-size:12.800px;font-weight:600;color:#3f4a45;letter-spacing:-.1px}
.dlgx{position:absolute;right:8px;top:9px;width:11px;height:11px}
.meta{margin:5px 0 0 2px}
.meta p{height:21px;line-height:21px;font-size:10.800px;color:#666;letter-spacing:-.15px}
.meta b{color:#555;font-weight:700}
.dlgtabs{display:flex;gap:10px;margin:10px 0 0 3px;height:18px}
.dlgtabs span{height:18px;line-height:16px;color:#444;letter-spacing:-.1px}
.dlgtabs .on{border-bottom:2px solid #0f6fc0;font-weight:600;color:#333;font-size:12.500px}
.msgbtns{display:flex;gap:4px;margin:6px 0 0 3px}
.msgbtn{width:20px;height:20px;background:#8fd0f5;display:flex;align-items:center;justify-content:center}
.msgbtn svg{width:18px;height:18px}
.msgs{margin:4px 0 0 2px;font:11px/18px "Liberation Mono",monospace;color:#333;letter-spacing:0}
.msgs .i{font-style:italic;color:#666}
.copyico{position:absolute;right:8px;top:117px;width:14px;height:16px}

.status{height:25px;background:#f5f7f7;display:flex;align-items:center;padding-left:6px;white-space:nowrap}
.scale{width:100px;height:22px;border:1px solid #777;background:#fff;display:flex;align-items:center;justify-content:space-between;padding:0 5px;color:#222}
.caret{border:3px solid transparent;border-top:4px solid #444;margin-top:4px}
.vsep{width:1px;height:16px;background:#999;margin-left:4px;flex:none}
.sticons{display:flex;gap:7px;margin-left:7px;width:107px;flex:none}
.coords{display:flex;align-items:center;gap:7px;margin-left:328px;width:170px;color:#333;flex:none;font-size:11px}
.status .vsep:nth-of-type(3){margin-left:331px}
.selected{display:flex;align-items:center;gap:6px;color:#999;margin-left:6px;width:132px;flex:none;letter-spacing:-.25px}
.pause{display:flex;gap:3px;margin:0 8px 0 8px}
.pause i{width:4px;height:14px;background:#333;display:block}
.refresh{width:16px;height:16px;margin-left:6px}

.side{width:320px;margin-left:7px;display:flex;flex-direction:column;flex:none}
.gp{height:636px;border:1px solid #0a70b8;border-radius:4px 4px 0 0;background:#f5f7f7;display:flex;flex-direction:column;padding-top:1px}
.gphead{padding:0 5px 0 7px}
.gpnav{height:24px;display:flex;align-items:center;justify-content:space-between;padding:0 6px 0 8px}
.navc{width:18px;height:18px}
.gptool{font-size:14px;color:#444;letter-spacing:-.1px}
.gptabs{display:flex;gap:12px;height:22px;margin:12px 6px 0 9px;position:relative;line-height:20px;color:#444;letter-spacing:-.08px}
.gptabs span{height:22px}
.gptabs .on{border-bottom:2px solid #0f6fc0;color:#333;font-weight:600}
.helpc{position:absolute;right:0;top:2px;width:16px;height:16px}
.fields{margin:13px 0 0 18px;display:block}
.flabel{display:block;height:13px;line-height:12px;color:#444}
.frow{display:flex;gap:7px;align-items:center;margin-bottom:6px}
.fbox{width:266px;height:22px;background:#fff;border:1px solid #888;line-height:20px;padding-left:4px;color:#333;display:flex;align-items:center;justify-content:space-between}
.clip{overflow:hidden;white-space:nowrap;justify-content:flex-start;letter-spacing:-.35px}
.sel{padding-right:7px}
.full{width:291px}
.fold{width:16px;height:12px}
.runrow{margin-top:auto;display:flex;justify-content:flex-end;padding-right:6px}
.runbtn{width:85px;height:23px;background:#fff;border:1px solid #666;border-radius:3px;display:flex;align-items:center;padding-left:11px;gap:7px}
.runbtn .chev8{margin-left:auto;margin-right:4px}
.playc{width:16px;height:16px}
.notice{height:44px;margin:7px 3px 1px 4px;background:#e0ecdf;display:flex;align-items:center;padding-left:13px;position:relative}
.ntext{margin-left:16px;line-height:19px;color:#333}
.nlinks{display:flex;gap:7px;color:#4f7f4c}
.nx{position:absolute;right:7px;top:17px;width:10px;height:10px}
.sidetabs{display:flex;height:21px;padding-left:5px;gap:7px;margin-top:-1px;position:relative}
.stab{height:21px;line-height:20px;color:#444;padding:0 1px}
.stab.on{width:88px;background:#f5f7f7;border:1px solid #0a70b8;border-top:0;border-radius:0 0 4px 4px;color:#0f6fc0;padding-left:4px;letter-spacing:-.2px}
```
